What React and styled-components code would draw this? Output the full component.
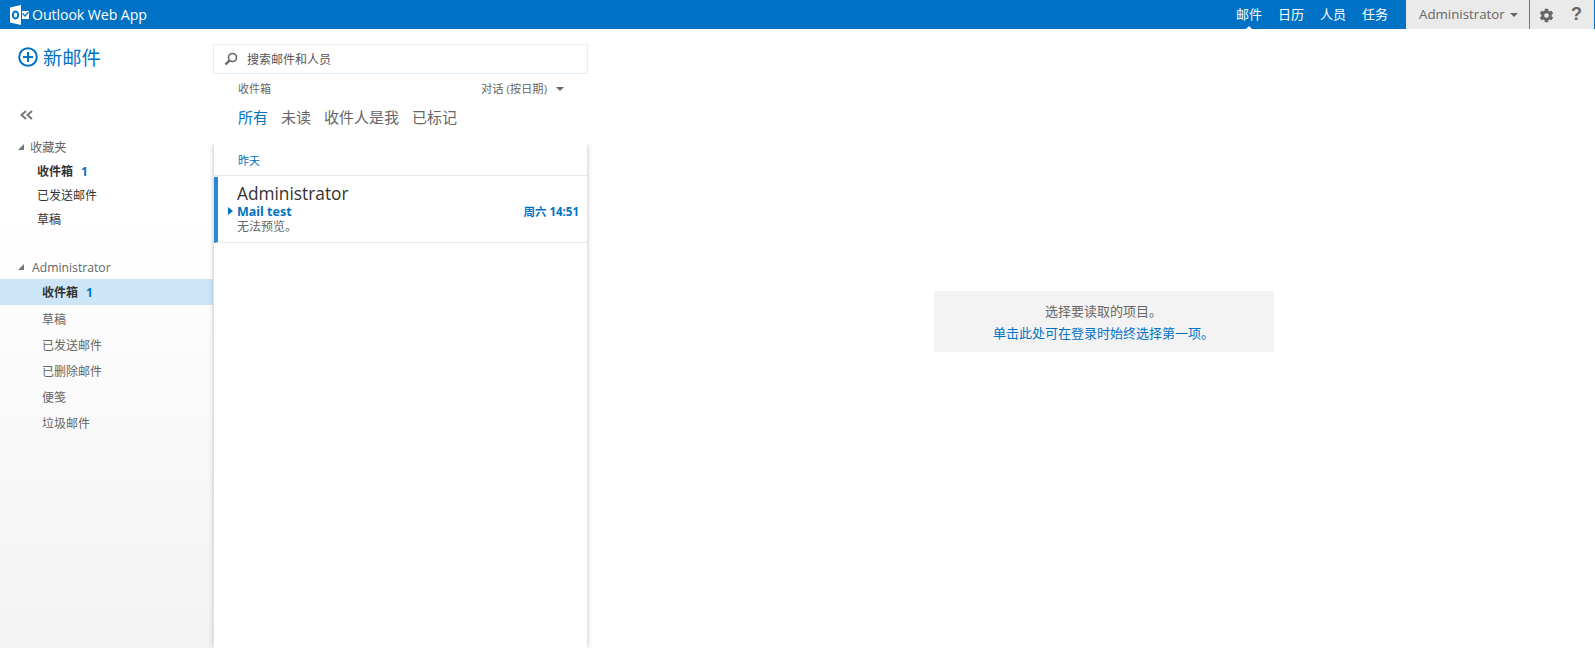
import styled, { createGlobalStyle } from "styled-components";
import { IoSettingsSharp } from "react-icons/io5";

const GlobalStyle = createGlobalStyle`
  html, body {
    margin: 0;
    padding: 0;
    height: 100%;
    background: #fff;
    overflow: hidden;
    font-family: "Open Sans", "Noto Sans CJK SC", sans-serif;
    color: #666;
  }
`;

const Page = styled.div`
  display: flex;
  flex-direction: column;
  height: 648px;
`;

const TopBar = styled.header`
  display: flex;
  align-items: stretch;
  height: 29px;
  background: #0072c6;
  color: #fff;
`;

const Brand = styled.div`
  display: flex;
  align-items: center;
  gap: 3px;
  padding-left: 10px;
  font-size: 14.2px;
  letter-spacing: -0.1px;
`;

const TopNav = styled.nav`
  display: flex;
  gap: 16px;
  margin-left: auto;
  padding-right: 18px;
`;

const TopLink = styled.a`
  position: relative;
  font-size: 13px;
  line-height: 28px;

  ${({ $active }) =>
    $active &&
    `&::after {
      content: "";
      position: absolute;
      left: 50%;
      bottom: 0;
      margin-left: -3px;
      border: 3px solid transparent;
      border-top: 0;
      border-bottom-color: #fff;
    }`}
`;

const UserArea = styled.div`
  display: flex;
  align-items: stretch;
  width: 188px;
  margin-right: 1px;
  background: #eaeaea;
  color: #666;
`;

const UserName = styled.div`
  display: flex;
  align-items: center;
  gap: 5px;
  width: 124px;
  padding-left: 13px;
  box-sizing: border-box;
  border-right: 1px solid #777;
  font-size: 13.3px;
  padding-bottom: 2px;
`;

const Caret = styled.span`
  display: block;
  margin-top: ${({ $mt }) => $mt || 2}px;
  border: 4px solid transparent;
  border-bottom: 0;
  border-top-color: #666;
`;

const GearBox = styled.div`
  display: flex;
  align-items: center;
  justify-content: center;
  width: 32px;
  font-size: 15px;
  padding-top: 1px;
`;

const Help = styled.div`
  display: flex;
  align-items: center;
  font-family: "Liberation Sans", sans-serif;
  font-size: 18px;
  font-weight: 700;
  padding-left: 9px;
`;

const Body = styled.div`
  display: flex;
  flex: 1;
  min-height: 0;
`;

const Sidebar = styled.aside`
  display: flex;
  flex-direction: column;
  width: 213px;
  flex: none;
  background: linear-gradient(#fff 0%, #fff 30%, #f3f3f3 100%);
`;

const NewMail = styled.div`
  display: flex;
  align-items: center;
  gap: 5px;
  height: 24px;
  margin-top: 16px;
  padding-left: 18px;
  color: #0072c6;
  font-size: 19.3px;
`;

const Collapse = styled.div`
  display: flex;
  height: 12px;
  margin-top: 40px;
  padding-left: 20px;
`;

const GroupHead = styled.div`
  display: flex;
  align-items: center;
  gap: ${({ $gap }) => $gap}px;
  height: 20px;
  margin-top: ${({ $mt }) => $mt}px;
  margin-bottom: 2px;
  padding-left: 18px;
  font-size: 12.2px;
`;

const Tri = styled.span`
  display: block;
  width: 0;
  height: 0;
  border-left: 6px solid transparent;
  border-bottom: 6px solid #777;
`;

const FavRow = styled.div`
  display: flex;
  align-items: center;
  gap: 8px;
  height: 24px;
  padding-left: 37px;
  font-size: 12px;
  color: #333;
  font-weight: ${({ $bold }) => ($bold ? 700 : 400)};
`;

const FolderRow = styled.div`
  display: flex;
  align-items: center;
  gap: 8px;
  height: 26px;
  box-sizing: border-box;
  padding: ${({ $selected }) => ($selected ? "0" : "2px")} 0 0 42px;
  font-size: 12px;
  background: ${({ $selected }) => ($selected ? "#cde6f7" : "transparent")};
  color: ${({ $selected }) => ($selected ? "#333" : "#666")};
  font-weight: ${({ $selected }) => ($selected ? 700 : 400)};
`;

const Count = styled.span`
  color: #0072c6;
  font-weight: 700;
`;

const MiddleColumn = styled.section`
  display: flex;
  flex-direction: column;
  width: 375px;
  flex: none;
`;

const SearchBox = styled.div`
  display: flex;
  align-items: center;
  gap: 9px;
  height: 30px;
  margin-top: 15px;
  padding-left: 10px;
  box-sizing: border-box;
  border: 1px solid #e3eff8;
  font-size: 12px;
  color: #555;
`;

const ListHead = styled.div`
  display: flex;
  align-items: center;
  justify-content: space-between;
  height: 16px;
  margin-top: 6px;
  padding: 0 24px 0 25px;
  font-size: 11px;
`;

const SortBy = styled.div`
  display: flex;
  align-items: center;
  gap: 9px;
  font-size: 11.3px;
`;

const Filters = styled.div`
  display: flex;
  gap: 13px;
  height: 22px;
  margin-top: 10px;
  padding-left: 25px;
  font-size: 15px;
  line-height: 22px;
`;

const Filter = styled.span`
  color: ${({ $active }) => ($active ? "#0072c6" : "#666")};
`;

const ListPanel = styled.div`
  flex: 1;
  margin: 16px 1px 0;
  background: #fff;
  box-shadow: 0 0 5px rgba(0, 0, 0, 0.28);
  clip-path: inset(0 -8px 0 -8px);
`;

const DayHead = styled.div`
  height: 32px;
  box-sizing: border-box;
  border-bottom: 1px solid #e8e8e8;
  padding: 9px 0 0 24px;
  font-size: 11px;
  line-height: 15px;
  color: #0072c6;
`;

const MailRow = styled.div`
  display: grid;
  grid-template-columns: 1fr auto;
  grid-auto-rows: min-content;
  position: relative;
  height: 66px;
  box-sizing: border-box;
  padding: 6px 8px 0 24px;
  border-left: 4px solid #2b88d8;
  margin-top: 1px;
  border-bottom: 1px solid #e8e8e8;
`;

const Sender = styled.div`
  grid-column: 1 / 3;
  font-size: 17.3px;
  line-height: 22px;
  color: #333;
  margin-left: -5px;
`;

const Subject = styled.div`
  font-size: 12.5px;
  font-weight: 700;
  line-height: 14px;
  color: #0072c6;
  margin-left: -5px;
  font-family: "Noto Sans", "Noto Sans CJK SC", sans-serif;
`;

const MailTime = styled.div`
  font-size: 11.5px;
  font-weight: 700;
  line-height: 14px;
  color: #0072c6;
  font-family: "Noto Sans", "Noto Sans CJK SC", sans-serif;
`;

const Preview = styled.div`
  grid-column: 1 / 3;
  font-size: 12px;
  line-height: 16px;
  margin-left: -5px;
`;

const Pointer = styled.span`
  position: absolute;
  left: 10px;
  top: 30px;
  border: 4px solid transparent;
  border-right: 0;
  border-left: 5px solid #0072c6;
`;

const ReadingPane = styled.main`
  flex: 1;
  display: flex;
  justify-content: center;
  align-items: flex-start;
  padding: 262px 0 0 24px;
`;

const EmptyNote = styled.div`
  width: 340px;
  height: 61px;
  box-sizing: border-box;
  padding-top: 9px;
  background: #f3f3f3;
  text-align: center;
  font-size: 13px;
  line-height: 22px;
`;

const NoteLink = styled.div`
  color: #0072c6;
`;

const LogoMark = () => (
  <svg width="19" height="20" viewBox="0 0 19 20" aria-hidden="true">
    <path d="M0 2.5 11 0v20L0 17.5z" fill="#fff" />
    <ellipse cx="5.500" cy="10" rx="2.700" ry="3.500" fill="none" stroke="#0072c6" strokeWidth="2" />
    <path d="M12 6h7v8h-7z" fill="#fff" />
    <path d="M12.500 8.500l2.500 2.500 3.500-4" fill="none" stroke="#0072c6" strokeWidth="1.200" />
  </svg>
);

const PlusIcon = () => (
  <svg width="20" height="20" viewBox="0 0 20 20" aria-hidden="true">
    <circle cx="10" cy="10" r="8.800" fill="none" stroke="#0072c6" strokeWidth="2" />
    <path d="M10 5v10M5 10h10" stroke="#0072c6" strokeWidth="2" />
  </svg>
);

const SearchIcon = () => (
  <svg width="14" height="14" viewBox="0 0 14 14" aria-hidden="true">
    <circle cx="8.500" cy="5.500" r="4" fill="none" stroke="#666" strokeWidth="1.600" />
    <path d="M5.500 8.500 1.500 12.500" stroke="#666" strokeWidth="2.400" />
  </svg>
);

const ChevronsLeft = () => (
  <svg width="13" height="12" viewBox="0 0 13 12" aria-hidden="true">
    <path d="M6 2 1.500 6 6 10M12 2 7.500 6 12 10" fill="none" stroke="#777" strokeWidth="2" />
  </svg>
);

const sideFolders = ["草稿", "已发送邮件", "已删除邮件", "便笺", "垃圾邮件"];

export default function App() {
  return (
    <Page>
      <GlobalStyle />
      <TopBar>
        <Brand>
          <LogoMark />
          Outlook Web App
        </Brand>
        <TopNav>
          <TopLink $active>邮件</TopLink>
          <TopLink>日历</TopLink>
          <TopLink>人员</TopLink>
          <TopLink>任务</TopLink>
        </TopNav>
        <UserArea>
          <UserName>
            Administrator
            <Caret />
          </UserName>
          <GearBox>
            <IoSettingsSharp />
          </GearBox>
          <Help>?</Help>
        </UserArea>
      </TopBar>
      <Body>
        <Sidebar>
          <NewMail>
            <PlusIcon />
            新邮件
          </NewMail>
          <Collapse>
            <ChevronsLeft />
          </Collapse>
          <GroupHead $mt={16} $gap={6}>
            <Tri />
            收藏夹
          </GroupHead>
          <FavRow $bold>
            收件箱 <Count>1</Count>
          </FavRow>
          <FavRow>已发送邮件</FavRow>
          <FavRow>草稿</FavRow>
          <GroupHead $mt={26} $gap={8}>
            <Tri />
            Administrator
          </GroupHead>
          <FolderRow $selected>
            收件箱 <Count>1</Count>
          </FolderRow>
          {sideFolders.map((name) => (
            <FolderRow key={name}>{name}</FolderRow>
          ))}
        </Sidebar>
        <MiddleColumn>
          <SearchBox>
            <SearchIcon />
            搜索邮件和人员
          </SearchBox>
          <ListHead>
            收件箱
            <SortBy>
              对话 (按日期)
              <Caret $mt={1} />
            </SortBy>
          </ListHead>
          <Filters>
            <Filter $active>所有</Filter>
            <Filter>未读</Filter>
            <Filter>收件人是我</Filter>
            <Filter>已标记</Filter>
          </Filters>
          <ListPanel>
            <DayHead>昨天</DayHead>
            <MailRow>
              <Pointer />
              <Sender>Administrator</Sender>
              <Subject>Mail test</Subject>
              <MailTime>周六 14:51</MailTime>
              <Preview>无法预览。</Preview>
            </MailRow>
          </ListPanel>
        </MiddleColumn>
        <ReadingPane>
          <EmptyNote>
            选择要读取的项目。
            <NoteLink>单击此处可在登录时始终选择第一项。</NoteLink>
          </EmptyNote>
        </ReadingPane>
      </Body>
    </Page>
  );
}
